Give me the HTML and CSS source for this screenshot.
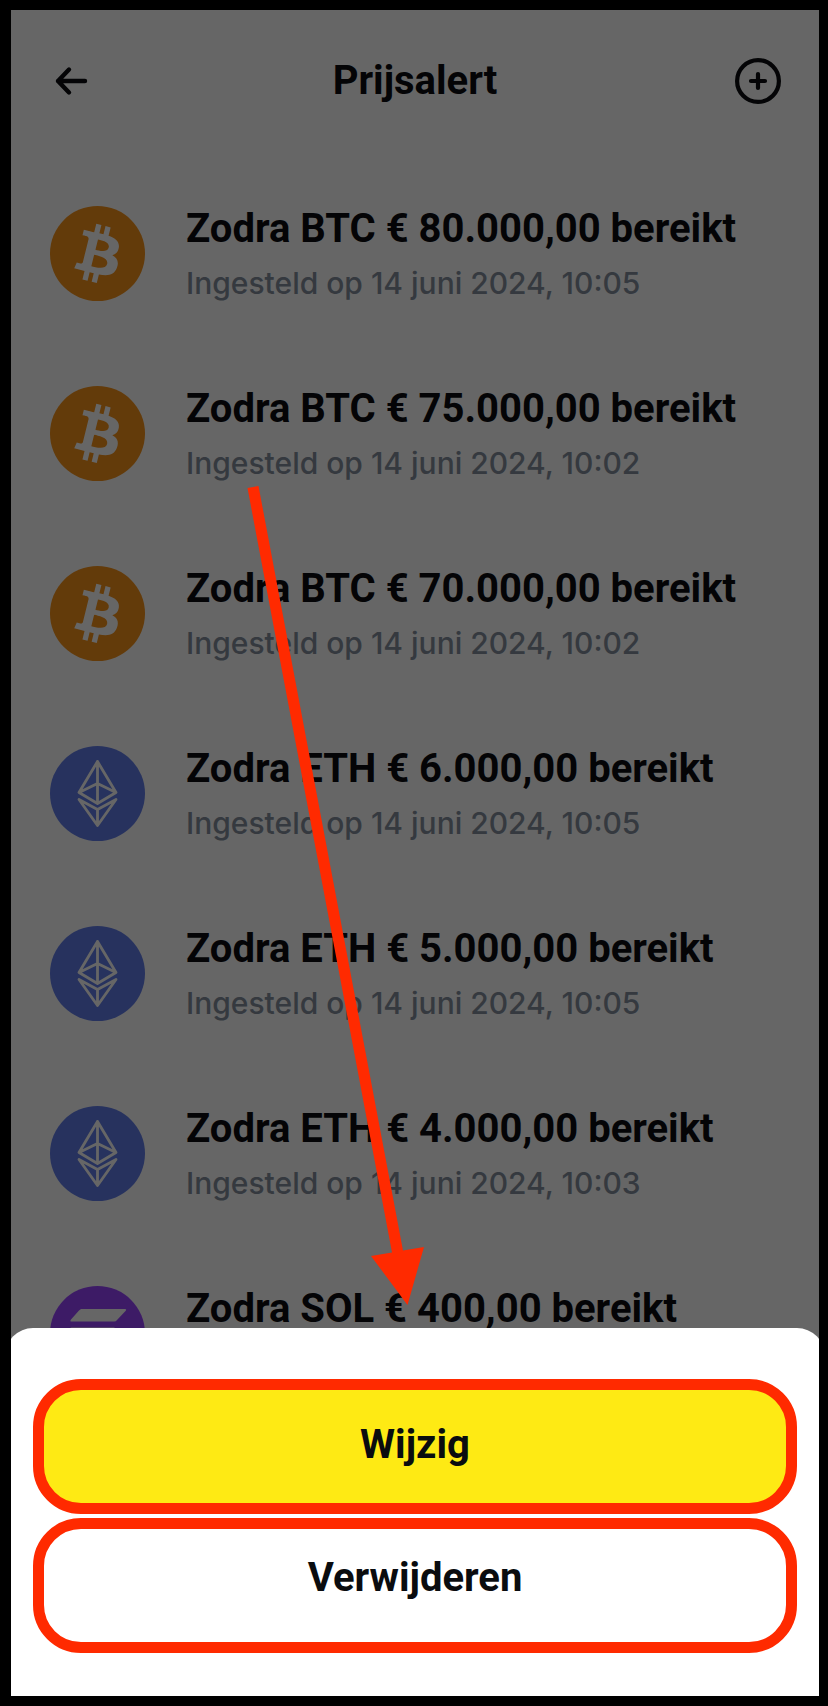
FILE: index.html
```html
<!DOCTYPE html>
<html lang="nl">
<head>
  <meta charset="UTF-8">
  <meta name="viewport" content="width=device-width, initial-scale=1.0">
  <title>Prijsalert</title>
  <link rel="stylesheet" href="styles.css">
</head>
<body>
  <!-- Shared coin icons -->
  <svg class="icon-defs" aria-hidden="true">
    <symbol id="btc" viewBox="0 0 32 32">
      <circle cx="16" cy="16" r="16" fill="#f7931a"/>
      <path fill="#fff" d="M23.189 14.02c.314-2.096-1.283-3.223-3.465-3.975l.708-2.84-1.728-.43-.69 2.765c-.454-.114-.92-.22-1.385-.326l.695-2.783L15.596 6l-.708 2.839c-.376-.086-.746-.17-1.104-.26l.002-.009-2.384-.595-.46 1.846s1.283.294 1.256.312c.7.175.826.638.805 1.006l-.806 3.235c.048.012.11.03.18.057l-.183-.045-1.13 4.532c-.086.212-.303.531-.793.41.018.025-1.256-.313-1.256-.313l-.858 1.978 2.25.561c.418.105.828.215 1.231.318l-.715 2.872 1.727.43.708-2.84c.472.127.93.245 1.378.357l-.706 2.828 1.728.43.715-2.866c2.948.558 5.164.333 6.097-2.333.752-2.146-.037-3.385-1.588-4.192 1.13-.26 1.98-1.003 2.207-2.538zm-3.95 5.538c-.533 2.147-4.148.986-5.32.695l.95-3.805c1.172.293 4.929.872 4.37 3.11zm.535-5.569c-.487 1.953-3.495.96-4.47.717l.86-3.45c.975.243 4.118.696 3.61 2.733z"/>
    </symbol>
    <symbol id="eth" viewBox="0 0 95 95">
      <circle cx="47.5" cy="47.5" r="47.5" fill="#627eea"/>
      <g fill="none" stroke="#fff" stroke-width="2.8" stroke-linejoin="round" stroke-linecap="round">
        <path d="M47.5 15.5 66 46.5 47.5 57.5 29 46.5ZM47.5 15.5V57.5M29 46.5 47.5 37.5 66 46.5"/>
        <path d="M29 53.5 47.5 63.5 66 53.5 47.5 79.5ZM47.5 63.5V79.5"/>
      </g>
    </symbol>
    <symbol id="sol" viewBox="0 0 95 95">
      <circle cx="47.5" cy="47.5" r="47.5" fill="#9945ff"/>
      <path fill="#fff" d="M31 23H75Q77 23 75.5 25L67 34Q66 35.5 64 35.5H21.5Q19.5 35.5 21 33.5L29 24.5ZM31 60H75Q77 60 75.5 62L67 71Q66 72.5 64 72.5H21.5Q19.5 72.5 21 70.5L29 61.5ZM64 41.5H21.5Q19.5 41.5 21 43.5L29 52.5 31 54H75Q77 54 75.5 52L67 43Z"/>
    </symbol>
  </svg>

  <main class="screen">
    <header class="topbar">
      <button class="icon-button" type="button" aria-label="Terug">
        <svg width="46" height="46" viewBox="0 0 46 46" fill="none" stroke="currentColor" stroke-width="4.4" stroke-linecap="round" stroke-linejoin="round">
          <path d="M36 23H9M20 11.500 9 23 20 34.500"/>
        </svg>
      </button>
      <h1 class="title">Prijsalert</h1>
      <button class="icon-button" type="button" aria-label="Alert toevoegen">
        <svg width="46" height="46" viewBox="0 0 46 46" fill="none" stroke="currentColor" stroke-width="4.2" stroke-linecap="round">
          <circle cx="23" cy="23" r="20.900"/>
          <path d="M23 16V30M16 23H30"/>
        </svg>
      </button>
    </header>

    <ul class="alerts">
      <li class="alert">
        <svg class="coin"><use href="#btc"/></svg>
        <div>
          <h2 class="alert-name">Zodra BTC € 80.000,00 bereikt</h2>
          <p class="alert-date">Ingesteld op 14 juni 2024, 10:05</p>
        </div>
      </li>
      <li class="alert">
        <svg class="coin"><use href="#btc"/></svg>
        <div>
          <h2 class="alert-name">Zodra BTC € 75.000,00 bereikt</h2>
          <p class="alert-date">Ingesteld op 14 juni 2024, 10:02</p>
        </div>
      </li>
      <li class="alert">
        <svg class="coin"><use href="#btc"/></svg>
        <div>
          <h2 class="alert-name">Zodra BTC € 70.000,00 bereikt</h2>
          <p class="alert-date">Ingesteld op 14 juni 2024, 10:02</p>
        </div>
      </li>
      <li class="alert">
        <svg class="coin"><use href="#eth"/></svg>
        <div>
          <h2 class="alert-name">Zodra ETH € 6.000,00 bereikt</h2>
          <p class="alert-date">Ingesteld op 14 juni 2024, 10:05</p>
        </div>
      </li>
      <li class="alert">
        <svg class="coin"><use href="#eth"/></svg>
        <div>
          <h2 class="alert-name">Zodra ETH € 5.000,00 bereikt</h2>
          <p class="alert-date">Ingesteld op 14 juni 2024, 10:05</p>
        </div>
      </li>
      <li class="alert">
        <svg class="coin"><use href="#eth"/></svg>
        <div>
          <h2 class="alert-name">Zodra ETH € 4.000,00 bereikt</h2>
          <p class="alert-date">Ingesteld op 14 juni 2024, 10:03</p>
        </div>
      </li>
      <li class="alert">
        <svg class="coin"><use href="#sol"/></svg>
        <div>
          <h2 class="alert-name">Zodra SOL € 400,00 bereikt</h2>
        </div>
      </li>
    </ul>

    <div class="backdrop"></div>

    <!-- Arrow pointing at the sheet -->
    <svg class="pointer" width="184" height="820" viewBox="0 0 184 820" aria-hidden="true">
      <path fill="#ff2a00" d="M7.500 2 18.500 0 163 764.500 184 761 167.500 819 131 770 152 766.500Z"/>
    </svg>

    <div class="sheet">
      <button class="sheet-button primary" type="button">Wijzig</button>
      <button class="sheet-button" type="button">Verwijderen</button>
    </div>
  </main>
</body>
</html>
```
FILE: styles.css
```css
* {
  box-sizing: border-box;
}

body {
  margin: 0;
  padding: 10px 9px 10px 11px;
  min-height: 100vh;
  display: flex;
  background: #000;
  color: #0a0c0f;
  font-family: Roboto, "Liberation Sans", sans-serif;
}

.icon-defs {
  position: absolute;
  width: 0;
  height: 0;
}

.screen {
  position: relative;
  flex: 1;
  overflow: hidden;
  background: #fff;
}

/* Top bar */
.topbar {
  display: flex;
  align-items: center;
  justify-content: space-between;
  padding: 46px 38px 0;
}

.title {
  margin: 0;
  font-size: 40px;
  line-height: 50px;
}

.icon-button {
  display: flex;
  padding: 0;
  border: 0;
  background: none;
  color: inherit;
}

/* Alert list */
.alerts {
  margin: 0;
  padding: 100px 39px 0;
  list-style: none;
}

.alert {
  display: flex;
  gap: 41px;
  height: 180px;
}

.coin {
  flex: none;
  width: 95px;
  height: 95px;
}

.alert-name {
  margin: 0;
  font-size: 40px;
  line-height: 46px;
  white-space: nowrap;
}

.alert-date {
  margin: 10px 0 0;
  color: #84909e;
  font-family: Inter, "Liberation Sans", sans-serif;
  font-size: 30px;
  font-weight: 500;
  line-height: 42px;
}

.backdrop {
  position: absolute;
  inset: 0;
  background: rgba(0, 0, 0, 0.6);
}

.pointer {
  position: absolute;
  top: 476px;
  left: 229px;
}

/* Bottom sheet, runs slightly past both screen edges */
.sheet {
  position: absolute;
  right: -6px;
  bottom: 0;
  left: -6px;
  display: flex;
  flex-direction: column;
  gap: 4px;
  padding: 51px 28px 43px;
  border-radius: 28px 28px 0 0;
  background: #fff;
}

.sheet-button {
  height: 135px;
  padding: 0 0 16px;
  border: 11px solid #ff2a00;
  border-radius: 48px;
  background: #fff;
  color: inherit;
  font: bold 40px Roboto, "Liberation Sans", sans-serif;
}

.sheet-button.primary {
  padding: 0 0 4px;
  background: #feea14;
}
```
